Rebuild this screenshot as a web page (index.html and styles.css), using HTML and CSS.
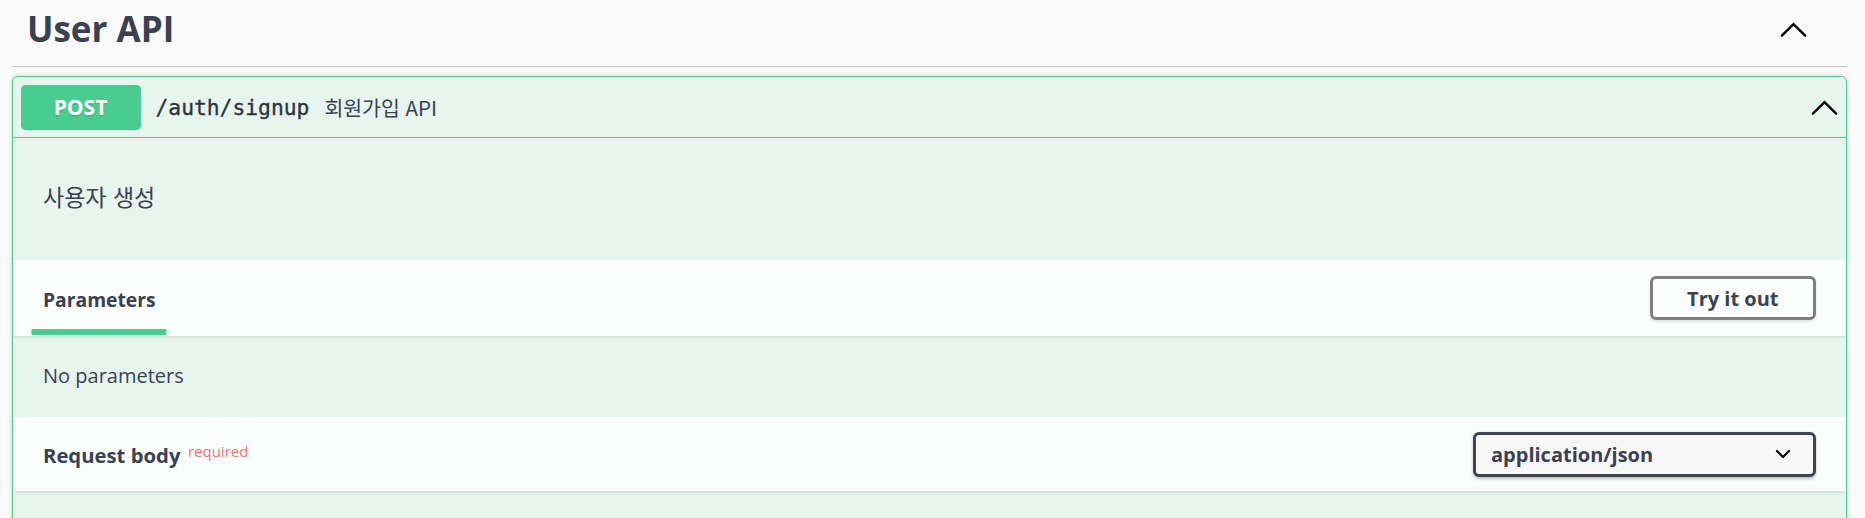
FILE: index.html
```html
<!DOCTYPE html>
<html lang="ko">
<head>
<meta charset="utf-8">
<title>User API</title>
<link rel="stylesheet" href="styles.css">
</head>
<body>
<div class="wrapper">
  <section class="tag-section">
    <h3 class="tag-title">
      <span class="tag-name">User API</span>
      <button class="expand" aria-label="Collapse operation">
        <svg class="chev" viewBox="0 0 20 20" width="31" height="31"><path d="M2.5 14 L10 6.5 L17.5 14" /></svg>
      </button>
    </h3>
    <div class="opblock">
      <div class="summary">
        <span class="method">POST</span>
        <span class="path">/auth/signup</span>
        <span class="summary-desc">회원가입 API</span>
        <span class="spacer"></span>
        <svg class="chev op-chev" viewBox="0 0 20 20" width="31" height="31"><path d="M2.5 14 L10 6.5 L17.5 14" /></svg>
      </div>
      <div class="op-body">
        <div class="desc"><p>사용자 생성</p></div>
        <div class="section-header tab-header">
          <div class="tab"><h4 class="tab-label">Parameters</h4></div>
          <button class="btn-try">Try it out</button>
        </div>
        <div class="params"><p>No parameters</p></div>
        <div class="section-header rb-header">
          <h4 class="rb-title">Request body<span class="required">required</span></h4>
          <div class="select">
            <span class="select-value">application/json</span>
            <svg class="sel-chev" viewBox="0 0 20 20" width="30" height="30"><path d="M6 8 L10 12 L14 8" /></svg>
          </div>
        </div>
        <div class="rest"></div>
      </div>
    </div>
  </section>
</div>
</body>
</html>
```
FILE: styles.css
```css
html, body {
  margin: 0;
  padding: 0;
  background: #fafafa;
}
body {
  font-family: "Open Sans", "Noto Sans CJK KR", sans-serif;
  color: #3b4151;
  height: 518px;
  overflow: hidden;
}
.wrapper {
  padding: 0 18px 0 12px;
}
.tag-title {
  margin: 0;
  height: 67px;
  box-sizing: border-box;
  display: flex;
  align-items: flex-start;
  justify-content: space-between;
  padding: 9px 38px 0 15px;
  border-bottom: 1px solid rgba(59, 65, 81, 0.3);
  font-size: 35px;
  font-weight: 700;
}
.tag-name {
  line-height: 40px;
}
.expand {
  background: none;
  border: none;
  padding: 0;
  margin: 5px 0 0 0;
  width: 31px;
  height: 31px;
  display: flex;
}
.chev path {
  fill: none;
  stroke: #000;
  stroke-width: 1.55;
  stroke-linecap: round;
  stroke-linejoin: miter;
}
.opblock {
  margin-top: 9px;
  border: 1px solid #49cc90;
  border-radius: 6px;
  background: rgba(73, 204, 144, 0.1);
  box-shadow: 0 0 4.5px rgba(0, 0, 0, 0.19);
  overflow: hidden;
}
.summary {
  display: flex;
  align-items: center;
  padding: 7.5px 6px 7.5px 7.5px;
  border-bottom: 1px solid #49cc90;
}
.op-chev {
  margin-top: 1px;
}
.method {
  min-width: 120px;
  padding: 9px 0;
  line-height: 27px;
  font-size: 21px;
  font-weight: 700;
  text-align: center;
  color: #fff;
  background: #49cc90;
  border-radius: 4.5px;
  text-shadow: 0 1.5px 0 rgba(0, 0, 0, 0.1);
}
.path {
  font-family: "DejaVu Sans Mono", monospace;
  font-size: 21.3px;
  padding: 0 15px;
  color: #2f3441;
  -webkit-text-stroke: 0.35px #2f3441;
}
.summary-desc {
  font-family: "Noto Sans CJK KR", sans-serif;
  font-size: 20.5px;
  color: #3b4151;
}
.spacer {
  flex: 1;
}
.desc {
  padding: 40px 30px 46px;
}
.desc p {
  margin: 0;
  font-family: "Noto Sans CJK KR", sans-serif;
  font-size: 23px;
  line-height: 36px;
}
.section-header {
  box-sizing: border-box;
  display: flex;
  align-items: center;
  justify-content: space-between;
  padding: 0 30px;
  background: rgba(255, 255, 255, 0.8);
  box-shadow: 0 1.5px 3px rgba(0, 0, 0, 0.1);
}
.tab-header {
  height: 76px;
}
.rb-header {
  height: 74px;
}
.tab {
  position: relative;
  align-self: stretch;
  display: flex;
  align-items: center;
  padding-top: 3px;
}
.tab::after {
  content: "";
  position: absolute;
  left: 50%;
  bottom: 1.5px;
  width: 120%;
  height: 6px;
  transform: translateX(-50%);
  background: #49cc90;
}
.tab-label {
  margin: 0;
  font-size: 19.3px;
  font-weight: 700;
}
.rb-title {
  margin: 0;
  font-size: 20.3px;
  font-weight: 700;
  padding-top: 2px;
}
.btn-try {
  font-family: "Open Sans", sans-serif;
  font-size: 20px;
  font-weight: 700;
  line-height: 23px;
  color: #3b4151;
  background: transparent;
  padding: 7.5px 34.5px;
  border: 3px solid #808080;
  border-radius: 6px;
  box-shadow: 0 1.5px 3px rgba(0, 0, 0, 0.1);
}
.params {
  padding: 22px 30px 23px;
}
.params p {
  margin: 0;
  font-size: 20px;
  line-height: 36px;
}
.required {
  position: relative;
  top: -6px;
  padding: 0 7.5px;
  font-size: 15px;
  font-weight: 400;
  color: rgba(255, 0, 0, 0.6);
}
.select {
  width: 343px;
  height: 45px;
  box-sizing: border-box;
  display: flex;
  align-items: center;
  justify-content: space-between;
  padding: 0 15px;
  border: 3px solid #41444e;
  border-radius: 6px;
  background: #f7f7f7;
  box-shadow: 0 1.5px 3px rgba(0, 0, 0, 0.25);
  font-size: 20px;
  font-weight: 700;
}
.sel-chev path {
  fill: none;
  stroke: #000;
  stroke-width: 1.5;
  stroke-linecap: round;
  stroke-linejoin: round;
}
.rest {
  height: 60px;
}
```
